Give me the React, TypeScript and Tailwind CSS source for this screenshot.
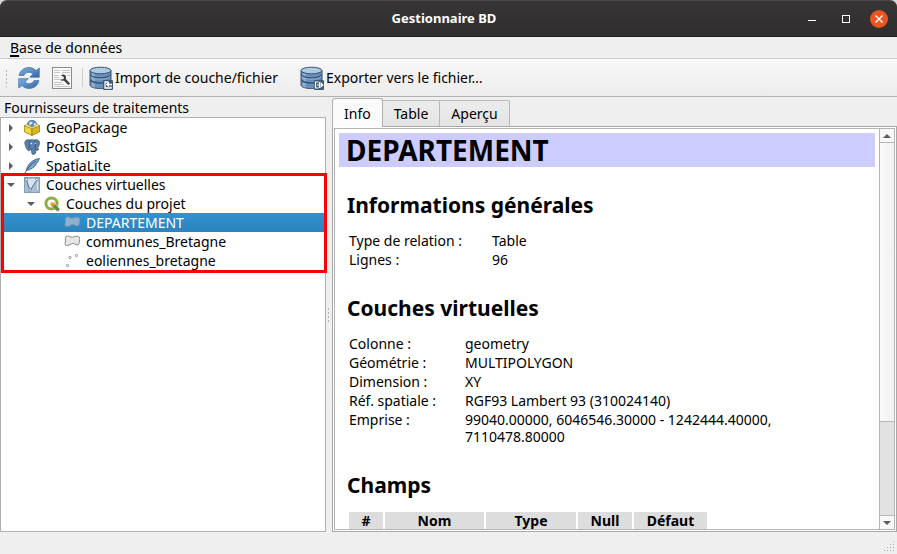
import { useState, type ReactNode } from "react";

function RefreshIcon() {
  return (
    <svg width="24" height="24" viewBox="0 0 24 24" className="shrink-0">
      <defs>
        <linearGradient id="refresh" x1="0" y1="0" x2="1" y2="1">
          <stop offset="0" stopColor="#7fb0e2" />
          <stop offset="1" stopColor="#3465a4" />
        </linearGradient>
      </defs>
      <path d="M2 9.5C3 4.500 7 1.500 12 1.500c3 0 5.300 1.200 7 3L22.300 2v9.300h-9.500l3-3.200C14.800 7 13.500 6.300 12 6.300c-2.600 0-4.200 1.200-5 3.200z" fill="url(#refresh)" stroke="#3f71b0" strokeWidth=".7" />
      <path d="M22 14.500c-1 5-5 8-10 8-3 0-5.300-1.200-7-3L1.700 22v-9.300h9.500l-3 3.200c1 1.100 2.300 1.800 3.800 1.800 2.600 0 4.200-1.200 5-3.200z" fill="url(#refresh)" stroke="#3f71b0" strokeWidth=".7" />
    </svg>
  );
}

function SqlWindowIcon() {
  return (
    <svg width="20" height="22" viewBox="0 0 20 22" className="shrink-0">
      <rect x=".5" y=".5" width="19" height="21" fill="#f8f8f8" stroke="#8a8c89" />
      <path d="M2 3.500h6M10 3.500h8M2 5.500h6M10 5.500h8M2 8.500h5M2 10.500h5M2 12.500h6M2 15.500h8M2 17.500h10M2 19.500h16M15 8.500h3" stroke="#c5c7c4" />
      <path d="M9 8.200c2-1.200 4.500-.5 5 1.500.2.900 0 1.500-.3 2.100l4.300 4.700-1.600 1.500-4.600-4.400c-1.500.5-3 0-3.700-1.100l3.200-.3.700-2z" fill="#3c3f40" />
    </svg>
  );
}

function DatabaseIcon({ out = false }: { out?: boolean }) {
  return (
    <svg width="24" height="24" viewBox="0 0 24 24" className="shrink-0">
      <path d="M1 4.500v14.500c0 2 4.500 3.600 10.500 3.600S22 21 22 19V4.500z" fill="#6890bd" stroke="#38536f" />
      <path d="M3.500 6.500v14.200M5 7v14.400" stroke="#8db0d6" strokeWidth="1.500" />
      <path d="M1.500 9c1.500 2 5 3 10 3s8.500-1 10-3M1.500 14c1.500 2 5 3 10 3s8.500-1 10-3" fill="none" stroke="#38536f" strokeWidth="1.300" />
      <path d="M2 10.300c2 2 5 2.800 9.500 2.800s7.500-.8 9.500-2.800" fill="none" stroke="#a4c1df" strokeWidth=".8" />
      <ellipse cx="11.500" cy="4.500" rx="10.500" ry="3.300" fill="#b0cae6" stroke="#38536f" />
      <rect x="14" y="14" width="10" height="10" rx="1" fill="#3f5b73" />
      {out ? (
        <path d="M18.500 16h-3v6h3M17 19h5.500M20.500 16.700l2.300 2.300-2.300 2.300M19.500 16v6" fill="none" stroke="#fff" strokeWidth="1.200" />
      ) : (
        <path d="M19.500 16H16v6h6v-1.500M23 18.500h-5M20 16.500l-2.200 2 2.200 2" fill="none" stroke="#fff" strokeWidth="1.300" />
      )}
    </svg>
  );
}

function GeoPackageIcon() {
  return (
    <svg width="16" height="16" viewBox="0 0 16 16" className="shrink-0">
      <circle cx="8" cy="5" r="4.800" fill="#5f8fc0" stroke="#34587f" strokeWidth=".6" />
      <path d="M5 2.500l2-1 1.500 1-1 2-2 .5zM9.500 3.500l2-.8.6 2-1.600 1.500z" fill="#d8e6f2" />
      <path d="M.5 5.500L8 8.500v7L.5 12z" fill="#f4d63b" stroke="#8a7411" strokeWidth=".7" />
      <path d="M15.500 5.500L8 8.500v7l7.500-3.500z" fill="#dbb51e" stroke="#8a7411" strokeWidth=".7" />
      <path d="M.5 5.500l2.800-1.300L8 7.300l4.700-3.100 2.800 1.300L8 8.700z" fill="#fff0a0" stroke="#8a7411" strokeWidth=".5" />
    </svg>
  );
}

function PostGisIcon() {
  return (
    <svg width="16" height="16" viewBox="0 0 16 16" className="shrink-0">
      <path d="M1 2.500C2.500.3 5 .7 6 1.200c1.500-.8 3-.6 4 0C12.500 0 15 1 15.400 3c.3 2.500-1 5-2.400 6.800l2 .3c-.7 1.100-2 1.500-3.200 1.200L11.500 14c-.4 1.700-3.200 2-3.700.2L7.500 10.500l-1.400.4c-.8 1.300-2 1.200-2.900-.4C1.800 8 .3 4.500 1 2.500z" fill="#5a82ad" stroke="#345578" strokeWidth=".8" />
      <path d="M6 1.500C4.800 3.500 5 6 5.500 8.500l1.500 1.800M10.300 1.500c1.700 2 1.500 4 .8 6.500v3" fill="none" stroke="#2f4f73" strokeWidth=".8" />
      <circle cx="7.300" cy="4.500" r=".7" fill="#fff" />
      <circle cx="11.300" cy="4.300" r=".6" fill="#fff" />
    </svg>
  );
}

function SpatiaLiteIcon() {
  return (
    <svg width="16" height="16" viewBox="0 0 16 16" className="shrink-0">
      <path d="M2.500 12.500C3 7 8 1.500 15.500.5c-1 2-1.500 3-2.500 4.500l-1 .3.300.8c-2 3-5 5.500-9.800 6.400z" fill="#7ba4cd" stroke="#31557c" strokeWidth=".8" />
      <path d="M.7 15.500C3 10.500 7 6 12 3" fill="none" stroke="#31557c" strokeWidth=".9" />
    </svg>
  );
}

function VirtualIcon() {
  return (
    <svg width="16" height="16" viewBox="0 0 16 16" className="shrink-0">
      <rect x=".5" y=".5" width="15" height="15" fill="#a9bed3" stroke="#869fb8" />
      <path d="M2 2l4 11.500L13.500 2" fill="#d6e2ee" stroke="#54718f" strokeWidth="1" />
      <path d="M13.500 3v10" stroke="#dfe8f1" />
      <g fill="#fff" stroke="#54718f" strokeWidth=".7">
        <circle cx="2.500" cy="2.500" r="1.300" />
        <circle cx="6" cy="13" r="1.300" />
        <circle cx="13" cy="2.500" r="1.300" />
      </g>
    </svg>
  );
}

function QgisIcon() {
  return (
    <svg width="16" height="16" viewBox="0 0 16 16" className="shrink-0">
      <circle cx="7.500" cy="7.500" r="5.600" fill="none" stroke="#8cae3f" strokeWidth="3" />
      <path d="M7 7h3.500l5 5.500v2.700h-2.700L7 10z" fill="#579239" stroke="#fff" strokeWidth=".5" />
      <path d="M6.500 6.500h3.300l1.600 1.800-2.600 2.600-2.300-2.200z" fill="#ee9b3a" />
    </svg>
  );
}

function PolygonIcon({ selected = false }: { selected?: boolean }) {
  return (
    <svg width="16" height="16" viewBox="0 0 16 16" className="shrink-0">
      <path
        d="M2 2.500C3.500 1.500 5.500 2 7 3.200c2.500.3 4-1.200 6.500-1C16 2.500 16 5 15.500 7c-.3 2-.5 4-2 4-2 0-3-1.800-5-1.500-1.700.2-3 2-5.500 2C.5 11.500.7 9.500 1.500 8 2 6.500.5 4 2 2.500z"
        fill={selected ? "#8fb0cb" : "#e6e6e6"}
        stroke={selected ? "#7298b8" : "#858585"}
      />
    </svg>
  );
}

function PointsIcon() {
  return (
    <svg width="16" height="16" viewBox="0 0 16 16" className="shrink-0">
      <g fill="#f2f2f2" stroke="#8a8a8a" strokeWidth=".8">
        <circle cx="3.500" cy="12.500" r="1.200" />
        <circle cx="6" cy="4.500" r="1.200" />
        <circle cx="12.500" cy="2.500" r="1.200" />
      </g>
    </svg>
  );
}

function Triangle({ dir }: { dir: "up" | "down" | "right" }) {
  const d = { up: "M0 6l4-4 4 4z", down: "M0 2h8l-4 4z", right: "M2 0l4 4-4 4z" }[dir];
  return (
    <svg width="8" height="8" viewBox="0 0 8 8" className="shrink-0">
      <path d={d} fill="#5c5c5c" />
    </svg>
  );
}

type RowProps = {
  label: string;
  icon: ReactNode;
  arrow?: "down" | "right";
  indent?: string;
  selected?: boolean;
};

function TreeRow({ label, icon, arrow, indent = "pl-[6px]", selected = false }: RowProps) {
  return (
    <li role="treeitem" aria-selected={selected} aria-expanded={arrow ? arrow === "down" : undefined}>
      <button
        type="button"
        className={`flex h-[19px] w-full items-center text-left ${indent} ${
          selected ? "bg-linear-to-b from-[#3292cf] to-[#2c84bd] text-white" : ""
        }`}
      >
        <span className="mr-[9px] flex w-2">{arrow && <Triangle dir={arrow} />}</span>
        {icon}
        <span className="ml-[6px] whitespace-nowrap">{label}</span>
      </button>
    </li>
  );
}

function InfoTable({ rows, width }: { rows: [string, string][]; width: string }) {
  return (
    <table className="border-separate border-spacing-[2px] text-left align-top">
      <tbody>
        {rows.map(([name, value]) => (
          <tr key={name}>
            <th scope="row" className={`p-0 align-top font-normal whitespace-nowrap ${width}`}>
              {name}
            </th>
            <td className="max-w-[360px] p-0 align-top">{value}</td>
          </tr>
        ))}
      </tbody>
    </table>
  );
}

const tabs = ["Info", "Table", "Aperçu"];
const fields: [string, string][] = [
  ["#", "w-[34px]"],
  ["Nom", "w-[99px]"],
  ["Type", "w-[90px]"],
  ["Null", "w-[54px]"],
  ["Défaut", "w-[73px]"],
];

export default function App() {
  const [tab, setTab] = useState("Info");
  return (
    <div className="flex h-screen flex-col overflow-hidden bg-[#efefef] font-['Noto_Sans','Open_Sans',sans-serif] text-[14px] leading-[17px] text-black">
      <div className="bg-[#d8d8d8]">
        <header className="grid h-[37px] grid-cols-[1fr_auto_1fr] items-center rounded-t-[7px] border-t border-b border-t-[#4a4848] border-b-[#1f1e1e] bg-linear-to-b from-[#373535] to-[#2f2d2d] pr-[9px] text-white">
          <span />
          <h1 className="text-[13px] font-bold">Gestionnaire BD</h1>
          <div className="flex items-center justify-end gap-[14px]">
            <button type="button" aria-label="Réduire" className="flex h-5 w-5 items-center justify-center">
              <span className="mt-1 h-px w-2 bg-white" />
            </button>
            <button type="button" aria-label="Agrandir" className="flex h-5 w-5 items-center justify-center">
              <span className="h-2 w-2 border border-white" />
            </button>
            <button type="button" aria-label="Fermer" className="flex h-[18px] w-[18px] items-center justify-center rounded-full bg-[#e95420]">
              <svg width="8" height="8" viewBox="0 0 8 8">
                <path d="M.5.5l7 7M7.500.5l-7 7" stroke="#fff" strokeWidth="1.400" />
              </svg>
            </button>
          </div>
        </header>
      </div>

      <nav className="flex h-[22px] shrink-0 items-center border-b border-[#cfcfcf] px-[10px]">
        <button type="button">
          <span className="underline decoration-2 underline-offset-2">B</span>ase de données
        </button>
      </nav>

      <div className="flex h-[38px] shrink-0 items-center border-b border-[#b2b2b2] bg-linear-to-b from-[#f8f8f8] to-[#ececec] pl-[5px]">
        <span className="h-[18px] w-1 bg-[radial-gradient(circle,#b5b5b5_1px,transparent_1px)] bg-[size:3px_4px]" />
        <button type="button" aria-label="Actualiser" className="ml-2">
          <RefreshIcon />
        </button>
        <button type="button" aria-label="Fenêtre SQL" className="ml-[11px]">
          <SqlWindowIcon />
        </button>
        <span className="ml-[10px] h-[19px] w-px bg-[#cdcdcd]" />
        <button type="button" className="ml-[6px] flex w-[194px] items-center gap-[2px] whitespace-nowrap">
          <DatabaseIcon />
          Import de couche/fichier
        </button>
        <button type="button" className="ml-[17px] flex items-center gap-[2px] whitespace-nowrap">
          <DatabaseIcon out />
          Exporter vers le fichier…
        </button>
      </div>

      <main className="flex min-h-0 flex-1">
        <section className="flex w-[326px] shrink-0 flex-col">
          <h2 className="flex h-[20px] items-center pl-1">Fournisseurs de traitements</h2>
          <ul role="tree" className="flex-1 border border-[#b0b0b0] bg-white">
            <TreeRow label="GeoPackage" arrow="right" icon={<GeoPackageIcon />} />
            <TreeRow label="PostGIS" arrow="right" icon={<PostGisIcon />} />
            <TreeRow label="SpatiaLite" arrow="right" icon={<SpatiaLiteIcon />} />
            <li role="none" className="relative">
              <ul role="group">
                <TreeRow label="Couches virtuelles" arrow="down" icon={<VirtualIcon />} />
                <TreeRow label="Couches du projet" arrow="down" indent="pl-[26px]" icon={<QgisIcon />} />
                <TreeRow label="DEPARTEMENT" indent="pl-[46px]" selected icon={<PolygonIcon selected />} />
                <TreeRow label="communes_Bretagne" indent="pl-[46px]" icon={<PolygonIcon />} />
                <TreeRow label="eoliennes_bretagne" indent="pl-[46px]" icon={<PointsIcon />} />
              </ul>
              <span className="pointer-events-none absolute top-[-2px] right-[-2px] bottom-[-3px] left-0 z-10 border-3 border-[#ff0000]" />
            </li>
          </ul>
        </section>

        <div className="flex w-[6px] shrink-0 items-center justify-center">
          <span className="h-4 w-1 bg-[radial-gradient(circle,#b5b5b5_1px,transparent_1px)] bg-[size:3px_4px]" />
        </div>

        <section className="flex min-w-0 flex-1 flex-col pt-px">
          <div role="tablist" className="flex h-[28px] items-end">
            {tabs.map((t) => (
              <button
                key={t}
                type="button"
                role="tab"
                aria-selected={t === tab}
                onClick={() => setTab(t)}
                className={
                  t === tab
                    ? "z-10 -mb-px h-[29px] rounded-t-[3px] border border-b-0 border-[#b0b0b0] bg-[#fbfbfb] px-[11px]"
                    : "-ml-px h-[26px] rounded-tr-[2px] border border-b-0 border-[#b8b8b8] bg-linear-to-b from-[#ececec] to-[#e4e4e4] px-[11px]"
                }
              >
                {t}
              </button>
            ))}
          </div>
          <div className="flex min-h-0 flex-1 border border-[#a8a8a8] bg-white p-px">
            <div className="flex min-w-0 flex-1 border border-[#b4b4b4]">
              <article className="min-w-0 flex-1 overflow-hidden p-1">
                <h1 className="bg-[#ccccff] pl-[7px] text-[28px] leading-[34px] font-bold">DEPARTEMENT</h1>
                <div className="pl-2">
                  <h2 className="mt-[25px] mb-3 text-[21px] leading-[26px] font-bold">Informations générales</h2>
                  <InfoTable
                    width="w-[141px] min-w-[141px]"
                    rows={[
                      ["Type de relation :", "Table"],
                      ["Lignes :", "96"],
                    ]}
                  />
                  <h2 className="mt-[25px] mb-3 text-[21px] leading-[26px] font-bold">Couches virtuelles</h2>
                  <InfoTable
                    width="w-[114px] min-w-[114px]"
                    rows={[
                      ["Colonne :", "geometry"],
                      ["Géométrie :", "MULTIPOLYGON"],
                      ["Dimension :", "XY"],
                      ["Réf. spatiale :", "RGF93 Lambert 93 (310024140)"],
                      ["Emprise :", "99040.00000, 6046546.30000 - 1242444.40000, 7110478.80000"],
                    ]}
                  />
                  <h2 className="mt-[25px] mb-3 text-[21px] leading-[26px] font-bold">Champs</h2>
                  <table className="table-fixed border-separate border-spacing-[2px]">
                    <thead>
                      <tr>
                        {fields.map(([name, width]) => (
                          <th key={name} scope="col" className={`bg-[#dddddd] p-0 font-bold ${width}`}>
                            <div className={width}>{name}</div>
                          </th>
                        ))}
                      </tr>
                    </thead>
                  </table>
                </div>
              </article>
              <div className="flex w-[15px] shrink-0 flex-col border-l border-[#b4b4b4] bg-[#e2e2e2]">
                <button type="button" aria-label="Défiler vers le haut" className="flex h-[14px] items-center justify-center border-b border-[#b8b8b8] bg-[#f8f8f8]">
                  <Triangle dir="up" />
                </button>
                <div className="flex-3 border-b border-[#b8b8b8] bg-linear-to-r from-[#fafafa] to-[#f0f0f0]" />
                <div className="flex-1" />
                <button type="button" aria-label="Défiler vers le bas" className="flex h-[14px] items-center justify-center border-t border-[#b8b8b8] bg-[#f8f8f8]">
                  <Triangle dir="down" />
                </button>
              </div>
            </div>
          </div>
        </section>
      </main>

      <footer className="flex h-[22px] shrink-0 items-end justify-end p-[2px]">
        <svg width="11" height="11" viewBox="0 0 11 11">
          <path d="M9 0h1v1h-1zM6 3h1v1h-1zM9 3h1v1h-1zM3 6h1v1h-1zM6 6h1v1h-1zM9 6h1v1h-1zM0 9h1v1h-1zM3 9h1v1h-1zM6 9h1v1h-1zM9 9h1v1h-1z" fill="#ababab" />
        </svg>
      </footer>
    </div>
  );
}
